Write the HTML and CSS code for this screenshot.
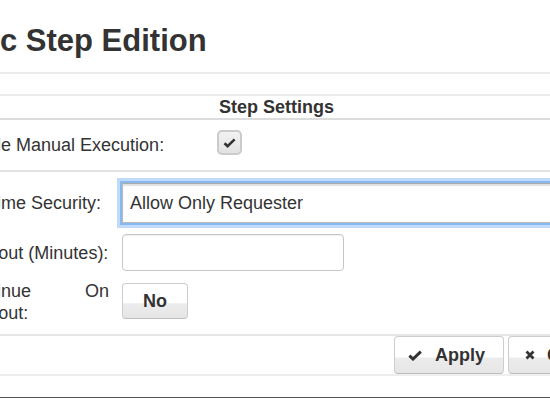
FILE: index.html
```html
<!DOCTYPE html>
<html lang="en">
<head>
  <meta charset="UTF-8" />
  <meta name="viewport" content="width=device-width, initial-scale=1.0">
  <title>Dynamic Step Edition</title>
  <link rel="stylesheet" href="styles.css">
</head>
<body>
  <div class="dialog">
    <h1 class="dialog-title">Dynamic Step Edition</h1>
    <div class="dialog-gap"></div>
    <div class="section-title">Step Settings</div>

    <div class="field-check">
      <label class="field-label">Enable Manual Execution:</label>
      <span class="checkbox">
        <svg width="13" height="10" viewBox="0 0 13 10"><path d="M1.5 5.2 L4.6 8.2 L11.6 1.4" fill="none" stroke="#333" stroke-width="2.6"/></svg>
      </span>
    </div>

    <div class="fields">
      <div class="field">
        <label class="field-label">Runtime Security:</label>
        <div class="select">Allow Only Requester</div>
      </div>
      <div class="field">
        <label class="field-label">Timeout (Minutes):</label>
        <input class="text-input" type="text" />
      </div>
      <div class="field field-top">
        <label class="field-label field-label-wrap">Continue On Timeout:</label>
        <div><button class="btn btn-toggle">No</button></div>
      </div>
    </div>

    <div class="dialog-footer">
      <button class="btn btn-action">
        <svg class="btn-icon" width="14" height="11" viewBox="0 0 14 11"><path d="M1.4 5.6 L5 9 L12.8 1.6" fill="none" stroke="#333" stroke-width="3"/></svg>
        Apply
      </button>
      <button class="btn btn-action">
        <svg class="btn-icon btn-icon-x" width="10" height="10" viewBox="0 0 10 10"><path d="M1.5 1.5 L8.5 8.5 M8.5 1.5 L1.5 8.5" fill="none" stroke="#333" stroke-width="2.8"/></svg>
        Cancel
      </button>
    </div>
    <div class="dialog-edge"></div>
  </div>
</body>
</html>
```

FILE: styles.css
```css
html,
body {
  margin: 0;
  overflow: hidden;
}

body {
  font-family: "Liberation Sans", Arial, sans-serif;
  color: #333;
  background: #fff;
  height: 398px;
}

.dialog {
  margin-left: -41px;
  width: 635px;
}

.dialog-title {
  font-size: 31px;
  line-height: 38px;
  font-weight: bold;
  margin: 0 0 0 -71px;
  padding: 22px 0 12px;
  white-space: nowrap;
  border-bottom: 2px solid #ebebeb;
}

.dialog-gap {
  height: 20px;
  border-bottom: 2px solid #ebebeb;
}

.section-title {
  font-size: 18px;
  line-height: 22px;
  font-weight: bold;
  text-align: center;
  border-bottom: 2px solid #dcdcdc;
}

.field-label {
  font-size: 18px;
  line-height: 22px;
  white-space: nowrap;
}

.field-check {
  display: grid;
  grid-template-columns: 258px auto;
  align-items: center;
  height: 50px;
  border-bottom: 2px solid #e3e3e3;
}

.field-check .field-label {
  margin-left: -4px;
}

.checkbox {
  width: 25px;
  height: 25px;
  box-sizing: border-box;
  border: 2px solid #cbcbcb;
  border-radius: 5px;
  background: linear-gradient(#f2f2f2, #e2e2e2);
  display: flex;
  align-items: center;
  justify-content: center;
  margin-bottom: 5px;
}

.checkbox svg {
  margin-top: 1px;
}

.fields {
  display: flex;
  flex-direction: column;
  gap: 11px;
  padding: 11px 0 15px;
  border-bottom: 2px solid #e5e5e5;
}

.field {
  display: grid;
  grid-template-columns: 150px 1fr;
  column-gap: 13px;
  align-items: center;
}

.field-top {
  align-items: start;
  margin-top: 1px;
}

.field-label-wrap {
  white-space: normal;
  text-align: justify;
  margin: -3px 0 -5px;
}

.select {
  height: 40px;
  box-sizing: border-box;
  border: 1px solid #b9b9b9;
  border-top-color: #aaa;
  padding: 0 7px;
  font-size: 18px;
  line-height: 38px;
  background: #fff;
  box-shadow: inset 0 2px 1px rgba(0, 0, 0, 0.12), 0 0 0 2px #86b9f0, 0 0 0 5px rgba(140, 190, 245, 0.55);
}

.text-input {
  width: 222px;
  height: 37px;
  box-sizing: border-box;
  border: 1px solid #c6c6c6;
  border-radius: 4px;
  box-shadow: inset 0 1px 1px rgba(0, 0, 0, 0.06);
  font-family: inherit;
  font-size: 18px;
  padding: 0 7px;
  margin: 0;
}

.btn {
  font-family: inherit;
  font-size: 18px;
  font-weight: bold;
  color: #333;
  box-sizing: border-box;
  border: 1px solid #cdcdcd;
  border-bottom-color: #bdbdbd;
  border-radius: 4px;
  background: linear-gradient(#fff 0, #fff 56%, #ececec 58%, #e6e6e6 100%);
  margin: 0;
  cursor: pointer;
}

.btn-toggle {
  width: 66px;
  height: 36px;
  padding: 0;
}

.dialog-footer {
  display: flex;
  gap: 4px;
  padding-left: 435px;
  margin-bottom: 21px;
  border-bottom: 2px solid #eee;
}

.btn-action {
  flex-shrink: 0;
  height: 38px;
  display: flex;
  align-items: center;
  padding: 0 18px 0 13px;
  white-space: nowrap;
}

.btn-icon {
  margin-right: 13px;
}

.btn-icon-x {
  margin-left: 3px;
  margin-right: 12px;
}

.dialog-edge {
  height: 2px;
  background: #555;
}
```
